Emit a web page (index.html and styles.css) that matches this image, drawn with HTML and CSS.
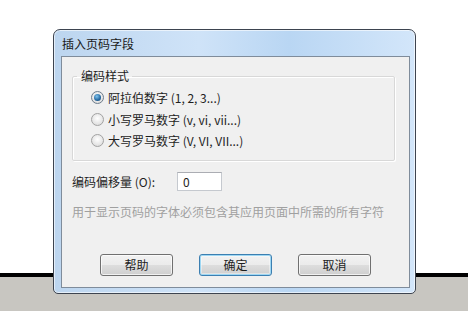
FILE: index.html
```html
<!DOCTYPE html>
<html lang="zh-CN">
<head>
<meta charset="utf-8">
<title>插入页码字段</title>
<link rel="stylesheet" href="styles.css">
</head>
<body>
<div class="desk">
  <div class="window">
    <div class="titlebar">插入页码字段</div>
    <div class="client">
      <fieldset class="group">
        <legend>编码样式</legend>
        <label class="radio"><span class="dot checked"></span><span>阿拉伯数字 (1, 2, 3...)</span></label>
        <label class="radio"><span class="dot"></span><span>小写罗马数字 (v, vi, vii...)</span></label>
        <label class="radio"><span class="dot"></span><span>大写罗马数字 (V, VI, VII...)</span></label>
      </fieldset>
      <div class="offset">
        <span class="offset-label">编码偏移量 (O):</span>
        <span class="input">0</span>
      </div>
      <div class="hint">用于显示页码的字体必须包含其应用页面中所需的所有字符</div>
      <div class="buttons">
        <span class="btn">帮助</span>
        <span class="btn default">确定</span>
        <span class="btn">取消</span>
      </div>
    </div>
  </div>
</div>
</body>
</html>
```

FILE: styles.css
```css
html, body {
  margin: 0;
  padding: 0;
}
body {
  width: 468px;
  height: 311px;
  overflow: hidden;
  font-family: "Noto Sans CJK SC", "Liberation Sans", sans-serif;
  font-size: 12px;
  color: #1e1e1e;
  background: linear-gradient(to bottom, #ffffff 0, #ffffff 273px, #000000 273px, #000000 277px, #c8c6c1 277px, #c8c6c1 100%);
}
.desk {
  padding: 29px 0 0 53px;
}
.window {
  width: 361px;
  height: 263px;
  border: 1px solid #3d4450;
  border-radius: 7px 7px 5px 5px;
  background: linear-gradient(to right, #bcd5ef 0%, #cfe3f8 40%, #b9d6f3 65%, #d3e6fa 100%);
  display: flex;
  flex-direction: column;
  box-shadow: inset 0 0 0 1px rgba(255,255,255,0.6);
}
.titlebar {
  height: 26px;
  line-height: 28px;
  padding-left: 8px;
  color: #1a1a1a;
  font-size: 12px;
}
.client {
  flex: 1;
  margin: 0 5px 5px 7px;
  border: 1px solid #7f8c9b;
  background: #f0f0f0;
  display: flex;
  flex-direction: column;
  padding: 0 0 0 10px;
}
.group {
  margin: 12px 0 0 0;
  width: 323px;
  height: 92px;
  box-sizing: border-box;
  border: 1px solid #d8d8d8;
  border-radius: 2px;
  box-shadow: inset 1px 1px 0 #ffffff, 1px 1px 0 #ffffff;
  padding: 0 0 0 18px;
}
.group legend {
  padding: 0 3px 0 4px;
  margin-left: -14px;
  font-size: 12px;
  line-height: 14px;
}
.radio {
  display: flex;
  align-items: center;
  height: 21.5px;
  gap: 4px;
}
.radio:first-of-type {
  margin-top: 4px;
}
.dot {
  width: 11px;
  height: 11px;
  border: 1px solid #a2a2a2;
  border-radius: 50%;
  background: radial-gradient(circle at 50% 40%, #ffffff 0, #e6e6e6 60%, #d4d4d4 100%);
  box-sizing: content-box;
  position: relative;
}
.dot.checked {
  border-color: #6e7d8c;
}
.dot.checked::after {
  content: "";
  position: absolute;
  left: 2px;
  top: 2px;
  width: 7px;
  height: 7px;
  border-radius: 50%;
  background: radial-gradient(circle at 40% 35%, #7fc4ee 0, #2a6ea6 55%, #0d3a63 100%);
}
.offset {
  display: flex;
  align-items: center;
  margin-top: 11px;
  height: 19px;
}
.offset-label {
  width: 105px;
}
.input {
  width: 38px;
  height: 17px;
  line-height: 17px;
  border: 1px solid #c5c9cf;
  border-top-color: #abadb3;
  background: #ffffff;
  padding-left: 5px;
}
.hint {
  margin-top: 12px;
  color: #a0a0a0;
  line-height: 18px;
}
.buttons {
  display: flex;
  gap: 26px;
  margin-top: 33px;
  padding-left: 28px;
}
.btn {
  width: 71px;
  height: 20px;
  line-height: 20px;
  text-align: center;
  border: 1px solid #707070;
  border-radius: 3px;
  background: linear-gradient(to bottom, #f2f2f2 0, #ebebeb 50%, #dddddd 51%, #cfcfcf 100%);
  box-shadow: inset 0 0 0 1px rgba(255,255,255,0.7);
}
.btn.default {
  border-color: #3c7fb1;
  box-shadow: inset 0 0 0 1px #9ed7f3, inset 0 0 0 2px rgba(255,255,255,0.4);
}
```
